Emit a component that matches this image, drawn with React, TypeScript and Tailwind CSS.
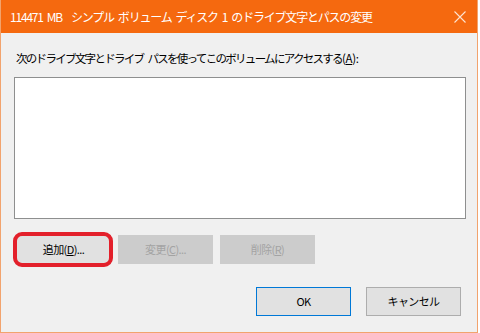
import React from "react";

const font = { fontFamily: '"Noto Sans CJK JP", "Noto Sans", sans-serif' };

function Btn({ children, disabled, primary }: { children: React.ReactNode; disabled?: boolean; primary?: boolean }) {
  return (
    <div
      className={
        "w-[95px] h-[29px] flex items-center justify-center text-[11px] tracking-[-0.6px] " +
        (disabled
          ? "bg-[#cccccc] border border-[#cccccc] text-[#a3a3a3]"
          : primary
          ? "bg-[#e1e1e1] border border-[#0078d7] text-black"
          : "bg-[#e1e1e1] border border-[#adadad] text-black")
      }
    >
      {children}
    </div>
  );
}

export default function App() {
  return (
    <div className="w-[480px] h-[333px] bg-white" style={font}>
      <div className="w-[478px] h-[333px] border-l border-r border-b border-[#f2a36d] flex flex-col">
        {/* title bar */}
        <div className="h-[33px] bg-[#f5690f] flex items-center justify-between pl-[9px] pr-[10px] text-white">
          <span className="text-[12px] tracking-[-1.2px] whitespace-pre">
            114471<span className="inline-block w-[4px]" />MB<span className="inline-block w-[9px]" />シンプル<span className="inline-block w-[4px]" />ボリューム<span className="inline-block w-[4px]" />ディスク<span className="inline-block w-[4px]" />1<span className="inline-block w-[4px]" />のドライブ文字とパスの変更
          </span>
          <svg width="12" height="12" viewBox="0 0 12 12" className="mr-[1px]">
            <path d="M0.5 0.5 L11.5 11.5 M11.5 0.5 L0.5 11.5" stroke="#fde3d0" strokeWidth="1.1" />
          </svg>
        </div>

        {/* body */}
        <div className="flex-1 bg-[#f0f0f0] pl-[13px] flex flex-col">
          <p className="mt-[17px] h-[16px] leading-[16px] text-[11.5px] tracking-[-1.7px] text-black pl-[2px]">
            次のドライブ文字とドライブ<span className="inline-block w-[4px]" />パスを使ってこのボリュームにアクセスする
            <span className="tracking-[-0.3px]">
              (<span className="underline">A</span>):
            </span>
          </p>

          <div className="mt-[11px] w-[452px] h-[142px] bg-white border border-[#8e8f8f]" />

          <div className="mt-[16px] pl-[2px] flex gap-[7px]">
            <div className="relative">
              <Btn>
                追加(<span className="underline">D</span>)...
              </Btn>
              <div className="absolute -left-[3px] -right-[2px] -top-[3px] -bottom-[3px] border-[4px] border-[#e3202b] rounded-[9px]" />
            </div>
            <Btn disabled>
              変更(<span className="underline">C</span>)...
            </Btn>
            <Btn disabled>
              削除(<span className="underline">R</span>)
            </Btn>
          </div>

          <div className="mt-[23px] flex justify-end gap-[15px] pr-[16px]">
            <Btn primary>OK</Btn>
            <Btn>キャンセル</Btn>
          </div>
        </div>
      </div>
    </div>
  );
}
